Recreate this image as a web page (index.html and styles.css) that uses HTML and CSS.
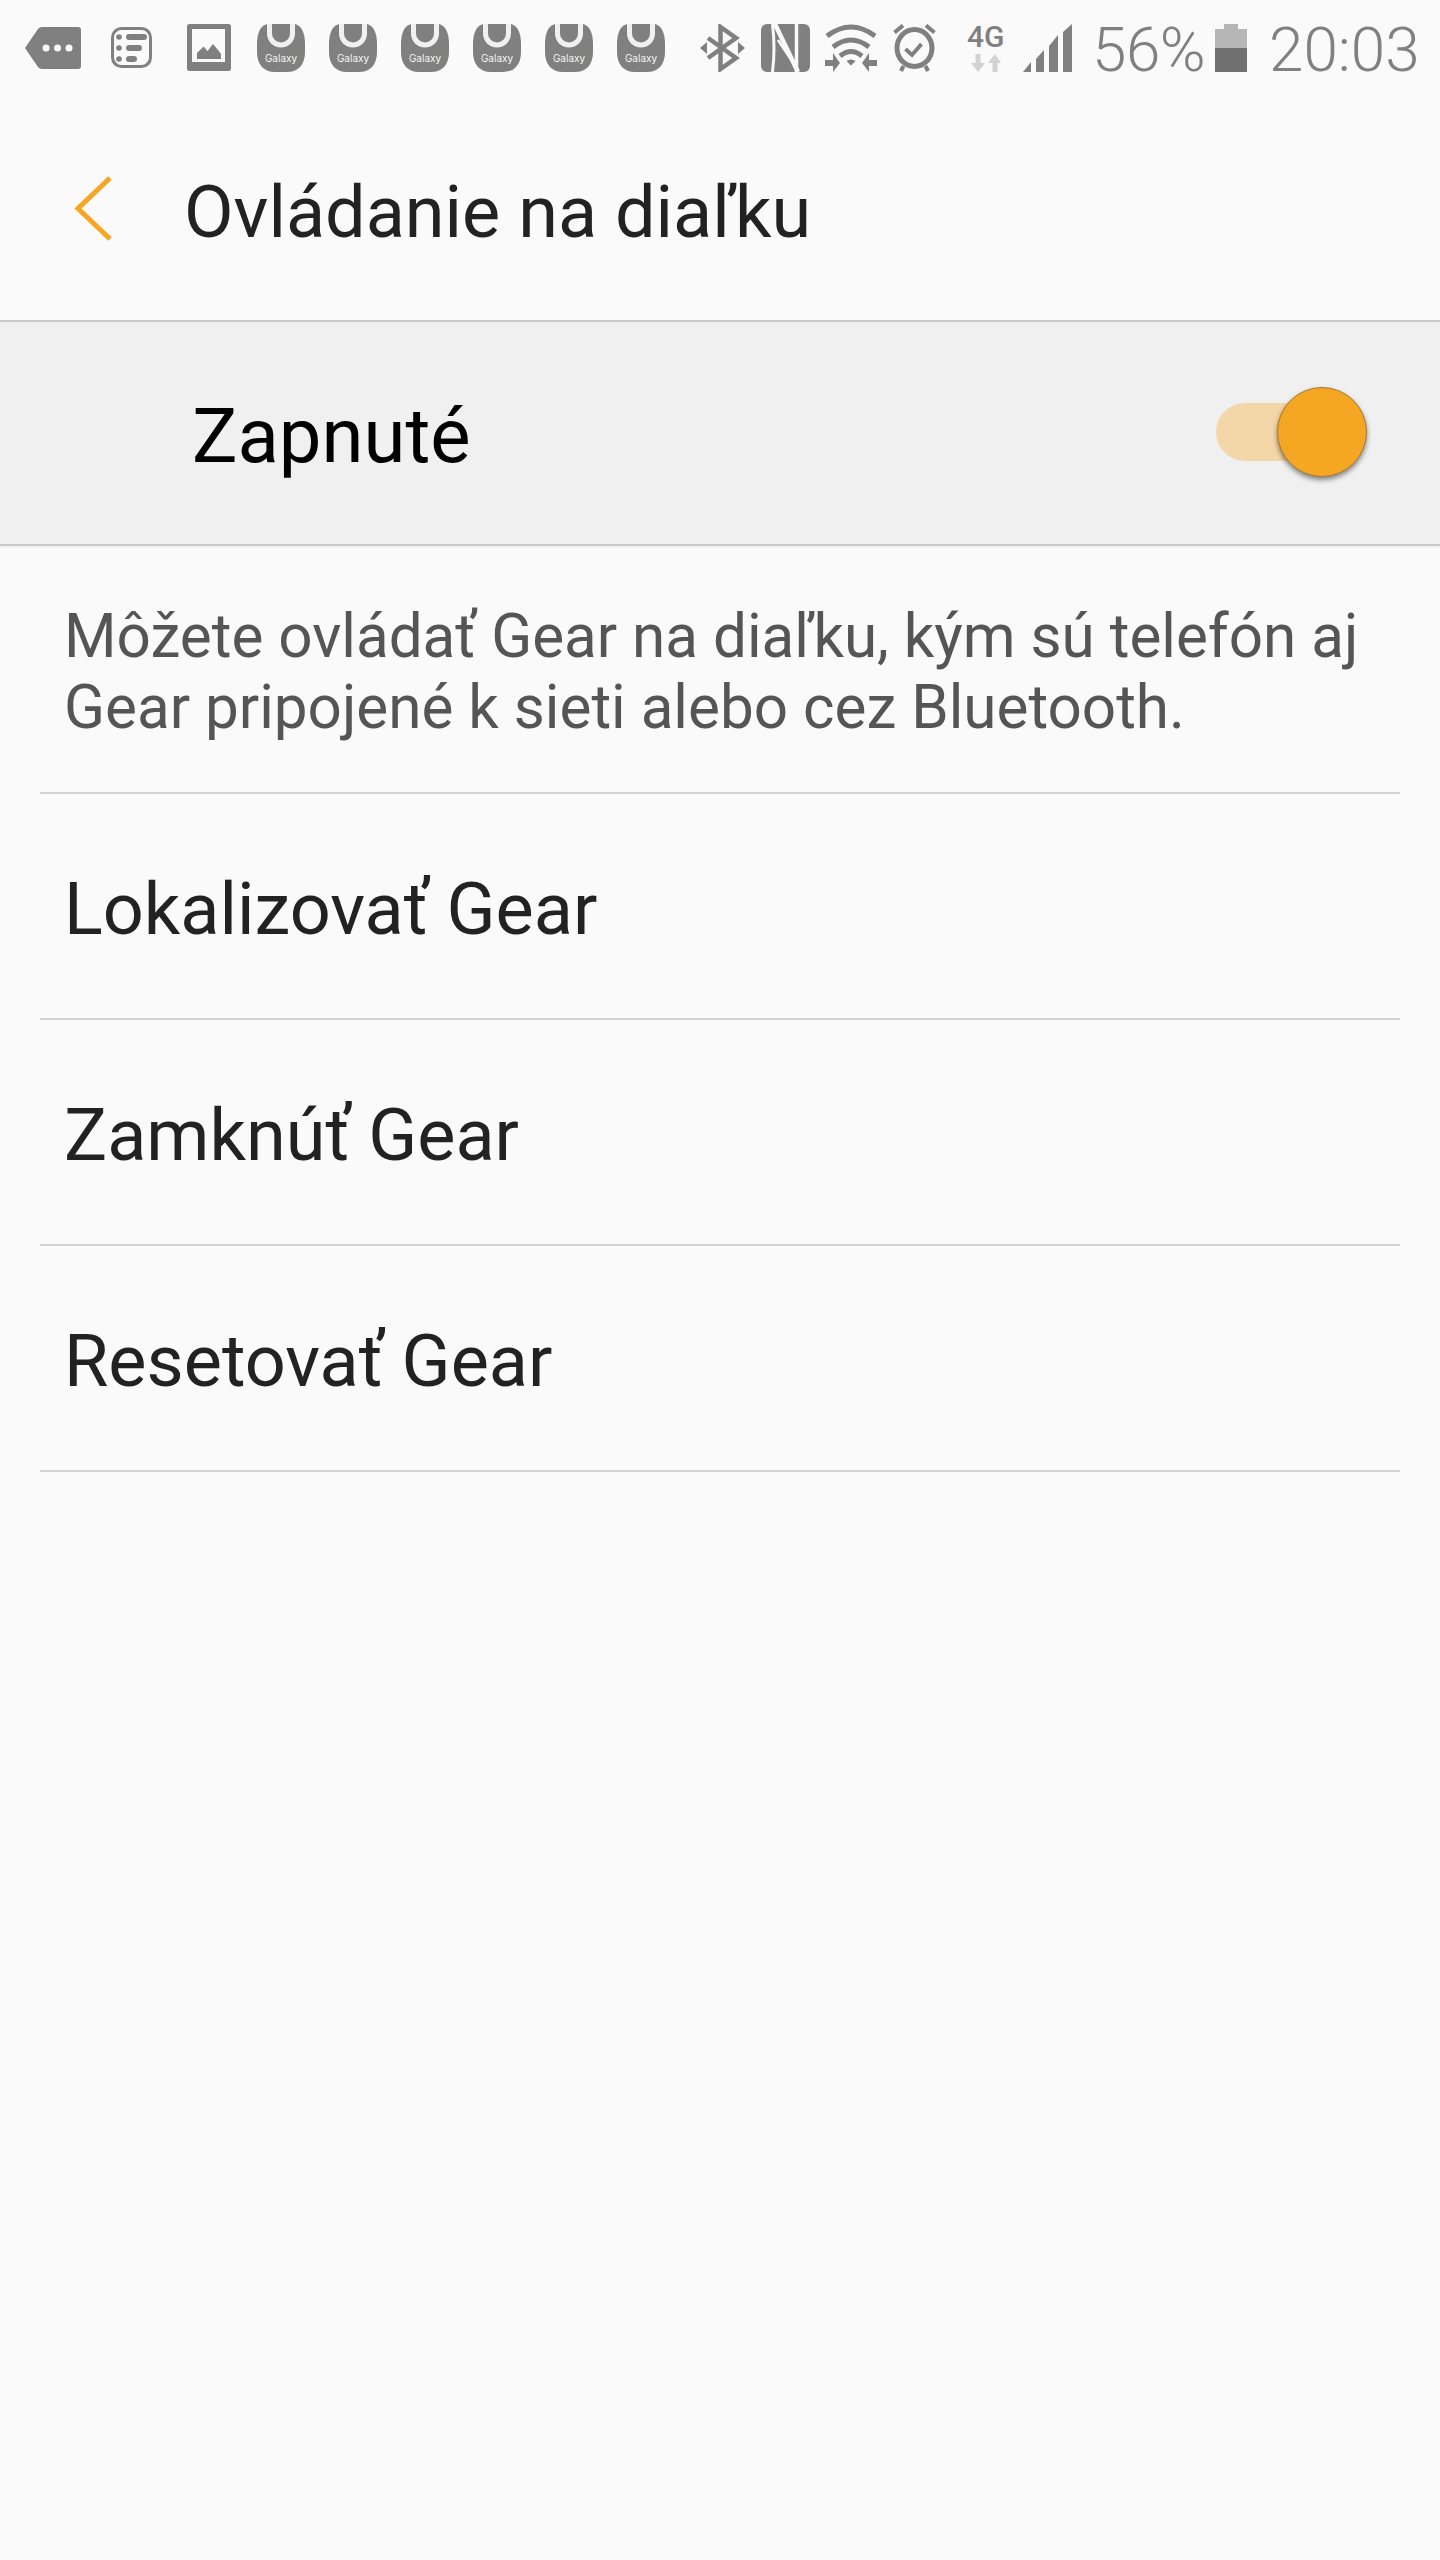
FILE: index.html
```html
<!DOCTYPE html>
<html lang="sk">
<head>
<meta charset="utf-8">
<title>Ovládanie na diaľku</title>
<link rel="stylesheet" href="styles.css">
</head>
<body>
<div class="status">
  <svg class="i tag" viewBox="0 0 56 42"><path d="M0 21L13 2Q14.500 0 17 0H53Q56 0 56 3V39Q56 42 53 42H17Q14.500 42 13 40Z" fill="#808080"/><circle cx="21" cy="21" r="3.500" fill="#fafafa"/><circle cx="32.500" cy="21" r="3.500" fill="#fafafa"/><circle cx="44" cy="21" r="3.500" fill="#fafafa"/></svg>
  <svg class="i list" viewBox="0 0 41 41"><rect x="1.500" y="1.500" width="38" height="38" rx="9" fill="none" stroke="#808080" stroke-width="3"/><g fill="#808080"><circle cx="8" cy="10" r="2.800"/><circle cx="8" cy="21" r="2.800"/><circle cx="8" cy="32" r="2.800"/><rect x="15" y="7" width="21" height="6" rx="3"/><rect x="15" y="18" width="16" height="6" rx="3"/><rect x="15" y="29" width="11" height="6" rx="3"/></g></svg>
  <svg class="i pic" viewBox="0 0 44 47"><rect width="44" height="47" rx="2.500" fill="#808080"/><rect x="5" y="5" width="33" height="33" fill="#fafafa"/><path d="M10 35V29L16.500 22.500L20.500 27L26 20L31 26L34 30V35Z" fill="#808080"/></svg>
  <svg class="i gal g-first" viewBox="0 0 48 48"><path class="g-bag" d="M12 0H36C44 0 48 8 48 20V28C48 41 41 48 30 48H18C7 48 0 41 0 28V20C0 8 4 0 12 0Z"/><path class="g-u" d="M12.500 -2V9.500a11.500 11.500 0 0 0 23 0V-2"/><text class="g-t" x="24" y="37.500" text-anchor="middle">Galaxy</text></svg>
  <svg class="i gal" viewBox="0 0 48 48"><path class="g-bag" d="M12 0H36C44 0 48 8 48 20V28C48 41 41 48 30 48H18C7 48 0 41 0 28V20C0 8 4 0 12 0Z"/><path class="g-u" d="M12.500 -2V9.500a11.500 11.500 0 0 0 23 0V-2"/><text class="g-t" x="24" y="37.500" text-anchor="middle">Galaxy</text></svg>
  <svg class="i gal" viewBox="0 0 48 48"><path class="g-bag" d="M12 0H36C44 0 48 8 48 20V28C48 41 41 48 30 48H18C7 48 0 41 0 28V20C0 8 4 0 12 0Z"/><path class="g-u" d="M12.500 -2V9.500a11.500 11.500 0 0 0 23 0V-2"/><text class="g-t" x="24" y="37.500" text-anchor="middle">Galaxy</text></svg>
  <svg class="i gal" viewBox="0 0 48 48"><path class="g-bag" d="M12 0H36C44 0 48 8 48 20V28C48 41 41 48 30 48H18C7 48 0 41 0 28V20C0 8 4 0 12 0Z"/><path class="g-u" d="M12.500 -2V9.500a11.500 11.500 0 0 0 23 0V-2"/><text class="g-t" x="24" y="37.500" text-anchor="middle">Galaxy</text></svg>
  <svg class="i gal" viewBox="0 0 48 48"><path class="g-bag" d="M12 0H36C44 0 48 8 48 20V28C48 41 41 48 30 48H18C7 48 0 41 0 28V20C0 8 4 0 12 0Z"/><path class="g-u" d="M12.500 -2V9.500a11.500 11.500 0 0 0 23 0V-2"/><text class="g-t" x="24" y="37.500" text-anchor="middle">Galaxy</text></svg>
  <svg class="i gal" viewBox="0 0 48 48"><path class="g-bag" d="M12 0H36C44 0 48 8 48 20V28C48 41 41 48 30 48H18C7 48 0 41 0 28V20C0 8 4 0 12 0Z"/><path class="g-u" d="M12.500 -2V9.500a11.500 11.500 0 0 0 23 0V-2"/><text class="g-t" x="24" y="37.500" text-anchor="middle">Galaxy</text></svg>
  <svg class="i bt" viewBox="0 0 45 48"><path d="M8 14L36 34L20.500 45V3L36 14L8 34" fill="none" stroke="#808080" stroke-width="4.500"/><path d="M0 24L7 18V30ZM45 24L38 18V30Z" fill="#808080"/></svg>
  <svg class="i nfc" viewBox="0 0 49 48"><rect width="49" height="48" rx="6" fill="#808080"/><g fill="none" stroke="#fafafa"><path d="M11.500 0Q14.500 24 11.500 48" stroke-width="3"/><path d="M13 -2L37 48" stroke-width="4.500"/><path d="M35.500 0V48" stroke-width="3.500"/><path d="M17 16L31 37" stroke-width="2.500"/></g></svg>
  <svg class="i wifi" viewBox="0 0 52 48"><g fill="none" stroke="#808080" stroke-width="5"><path d="M2 12Q26 -6 50 12"/><path d="M8 23Q26 9 44 23"/><path d="M15 32Q26 23 37 32"/></g><path d="M21.500 37Q26 34 30.500 37L26 41.500ZM0 36H8V29L15 39L8 48V42H0ZM52 36H44V29L37 39L44 48V42H52Z" fill="#808080"/></svg>
  <svg class="i alarm" viewBox="0 0 43 48"><g fill="none" stroke="#808080"><ellipse cx="21.500" cy="24" rx="17.500" ry="18.500" stroke-width="5"/><path d="M12.500 25L19 31L28.500 20" stroke-width="4"/><path d="M1.500 8.500L10 1.500M41.500 8.500L33 1.500M8 47L10.500 42M35 47L32.500 42" stroke-width="4"/></g></svg>
  <div class="net">
    <span class="net-t">4G</span>
    <svg class="net-a" viewBox="0 0 30 18"><path d="M4.500 0H9.500V9H14L7 18L0 9H4.500ZM21.500 18H26.500V9H30L24 0L17 9H21.500Z" fill="#d2d2d2"/></svg>
  </div>
  <svg class="i sig" viewBox="0 0 49 48"><path d="M0 48L8 38V48ZM13 35L21 26V48H13ZM26 22L35 11V48H26ZM40 8L49 0V48H40Z" fill="#808080"/></svg>
  <span class="pct">56%</span>
  <svg class="i bat" viewBox="0 0 32 48"><path d="M9 0H23V5H32V24H0V5H9Z" fill="#b6b6b6"/><rect y="24" width="32" height="24" fill="#707070"/></svg>
  <span class="clock">20:03</span>
</div>

<header class="head">
  <svg class="back" viewBox="0 0 38 65"><path d="M36 2L4 32.500L36 63" fill="none" stroke="#f5a623" stroke-width="5"/></svg>
  <h1 class="title">Ovládanie na diaľku</h1>
</header>

<div class="switch-row">
  <span class="switch-label">Zapnuté</span>
  <div class="switch"><span class="knob"></span></div>
</div>

<p class="desc">Môžete ovládať Gear na diaľku, kým sú telefón aj<br>Gear pripojené k sieti alebo cez Bluetooth.</p>

<div class="items">
  <div class="item">Lokalizovať Gear</div>
  <div class="item">Zamknúť Gear</div>
  <div class="item">Resetovať Gear</div>
</div>
</body>
</html>
```

FILE: styles.css
```css
* { box-sizing: border-box; }
html, body { margin: 0; padding: 0; }
body {
  width: 1440px;
  height: 2560px;
  background: #fafafa;
  font-family: Roboto, sans-serif;
  overflow: hidden;
}

.status {
  display: flex;
  align-items: flex-start;
  height: 96px;
  padding: 24px 0 0 25px;
  color: #808080;
}
.i { display: block; flex: none; }
.tag { width: 56px; height: 42px; margin-top: 3px; }
.list { width: 41px; height: 41px; margin: 3px 0 0 30px; }
.pic { width: 44px; height: 47px; margin-left: 35px; }
.gal { width: 48px; height: 48px; margin-left: 24px; }
.g-first { margin-left: 26px; }
.g-bag { fill: #808080; }
.g-u { fill: none; stroke: #f0f0f0; stroke-width: 5; }
.g-t { font-family: Inter, sans-serif; font-size: 10px; fill: #f4f4f4; }
.bt { width: 45px; height: 48px; margin-left: 35px; }
.nfc { width: 49px; height: 48px; margin-left: 16px; }
.wifi { width: 52px; height: 48px; margin-left: 15px; }
.alarm { width: 43px; height: 48px; margin-left: 16px; }
.net { width: 38px; height: 48px; margin-left: 31px; }
.net-t {
  display: block;
  font-size: 30px;
  font-weight: 500;
  line-height: 26px;
  white-space: nowrap;
}
.net-a { display: block; width: 30px; height: 18px; margin: 4px 0 0 4px; }
.sig { width: 49px; height: 48px; margin-left: 18px; }
.pct, .clock {
  font-size: 62px;
  font-weight: 300;
  line-height: 52px;
  height: 48px;
  white-space: nowrap;
}
.pct { margin-left: 20px; width: 120px; letter-spacing: -.5px; }
.bat { width: 32px; height: 48px; margin-left: 3px; }
.clock { margin-left: 22px; }

.head {
  display: flex;
  align-items: center;
  height: 226px;
  padding: 8px 0 0 74px;
  border-bottom: 2px solid #c9c9c9;
  box-shadow: 0 1px 2px rgba(0, 0, 0, .08);
}
.back { width: 38px; height: 65px; flex: none; margin-bottom: 7px; }
.title {
  margin: 0 0 0 72px;
  font-size: 72px;
  font-weight: 400;
  color: #222;
  white-space: nowrap;
}

.switch-row {
  display: flex;
  align-items: center;
  justify-content: space-between;
  height: 224px;
  padding: 0 88px 0 192px;
  background: #f0f0f0;
  border-bottom: 2px solid #c9c9c9;
  box-shadow: 0 1px 2px rgba(0, 0, 0, .08);
}
.switch-label { font-size: 76px; color: #000; margin-top: 6px; }
.switch {
  position: relative;
  width: 136px;
  height: 58px;
  margin-bottom: 2px;
  border-radius: 29px;
  background: #f4d7a8;
}
.knob {
  position: absolute;
  right: -15px;
  top: -16px;
  width: 90px;
  height: 90px;
  border-radius: 50%;
  background: #f5a623;
  border: 1.5px solid #a67a30;
  box-shadow: 0 3px 5px rgba(0, 0, 0, .45);
}

.desc {
  margin: 0;
  height: 246px;
  padding: 55px 40px 0 64px;
  font-size: 60.2px;
  line-height: 71px;
  color: #555;
  white-space: nowrap;
}

.items { margin: 0 40px; }
.item {
  display: flex;
  align-items: center;
  height: 226px;
  padding: 6px 0 0 24px;
  border-top: 2px solid #d4d4d4;
  font-size: 72px;
  color: #222;
}
.item:last-child { border-bottom: 2px solid #d4d4d4; height: 228px; }
```
